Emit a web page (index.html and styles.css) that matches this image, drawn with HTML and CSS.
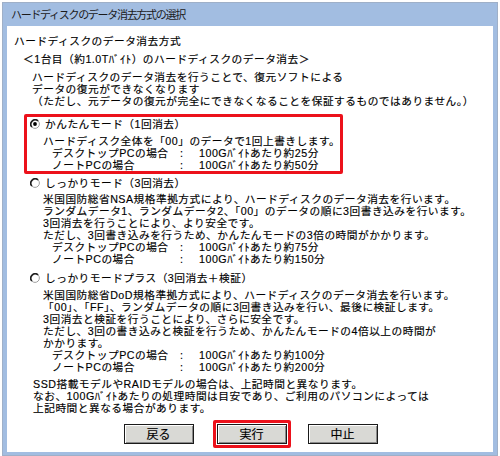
FILE: index.html
```html
<!DOCTYPE html>
<html lang="ja">
<head>
<meta charset="utf-8">
<title>ハードディスクのデータ消去方式の選択</title>
<link rel="stylesheet" href="styles.css">
</head>
<body>
<div class="window">
  <div class="titlebar">ハードディスクのデータ消去方式の選択</div>
  <div class="client">
    <div class="line heading">ハードディスクのデータ消去方式</div>
    <div class="line sub">＜1台目（約1.0Tﾊﾞｲﾄ）のハードディスクのデータ消去＞</div>
    <div class="intro">
      <div class="line">ハードディスクのデータ消去を行うことで、復元ソフトによる</div>
      <div class="line">データの復元ができなくなります</div>
      <div class="line">（ただし、元データの復元が完全にできなくなることを保証するものではありません。）</div>
    </div>

    <div class="option opt1 selected">
      <div class="opt-label">
        <svg class="radio" width="10" height="10" viewBox="0 0 10 10"><circle cx="5" cy="5" r="4.4" fill="#fff" stroke="#a0a0a0" stroke-width="1"/><path d="M1.9 8.1 A4.4 4.4 0 0 1 8.1 1.9" fill="none" stroke="#1e1e1e" stroke-width="1.6"/><circle cx="5" cy="5" r="1.9" fill="#000"/></svg>
        <span class="line">かんたんモード（1回消去）</span>
      </div>
      <div class="desc d1">
        <div class="line">ハードディスク全体を「00」のデータで1回上書きします。</div>
        <div class="time"><span>デスクトップPCの場合</span><span>:</span><span>100Gﾊﾞｲﾄあたり約25分</span></div>
        <div class="time"><span>ノートPCの場合</span><span>:</span><span>100Gﾊﾞｲﾄあたり約50分</span></div>
      </div>
    </div>

    <div class="option opt2">
      <div class="opt-label">
        <svg class="radio" width="10" height="10" viewBox="0 0 10 10"><circle cx="5" cy="5" r="4.4" fill="#fff" stroke="#a0a0a0" stroke-width="1"/><path d="M1.9 8.1 A4.4 4.4 0 0 1 8.1 1.9" fill="none" stroke="#1e1e1e" stroke-width="1.6"/></svg>
        <span class="line">しっかりモード（3回消去）</span>
      </div>
      <div class="desc d2">
        <div class="line">米国国防総省NSA規格準拠方式により、ハードディスクのデータ消去を行います。</div>
        <div class="line">ランダムデータ1、ランダムデータ2、「00」のデータの順に3回書き込みを行います。</div>
        <div class="line">3回消去を行うことにより、より安全です。</div>
        <div class="line">ただし、3回書き込みを行うため、かんたんモードの3倍の時間がかかります。</div>
        <div class="time"><span>デスクトップPCの場合</span><span>:</span><span>100Gﾊﾞｲﾄあたり約75分</span></div>
        <div class="time"><span>ノートPCの場合</span><span>:</span><span>100Gﾊﾞｲﾄあたり約150分</span></div>
      </div>
    </div>

    <div class="option opt3">
      <div class="opt-label">
        <svg class="radio" width="10" height="10" viewBox="0 0 10 10"><circle cx="5" cy="5" r="4.4" fill="#fff" stroke="#a0a0a0" stroke-width="1"/><path d="M1.9 8.1 A4.4 4.4 0 0 1 8.1 1.9" fill="none" stroke="#1e1e1e" stroke-width="1.6"/></svg>
        <span class="line">しっかりモードプラス（3回消去＋検証）</span>
      </div>
      <div class="desc d3">
        <div class="line">米国国防総省DoD規格準拠方式により、ハードディスクのデータ消去を行います。</div>
        <div class="line">「00」、「FF」、ランダムデータの順に3回書き込みを行い、最後に検証します。</div>
        <div class="line">3回消去と検証を行うことにより、さらに安全です。</div>
        <div class="line">ただし、3回の書き込みと検証を行うため、かんたんモードの4倍以上の時間が</div>
        <div class="line">かかります。</div>
        <div class="time"><span>デスクトップPCの場合</span><span>:</span><span>100Gﾊﾞｲﾄあたり約100分</span></div>
        <div class="time"><span>ノートPCの場合</span><span>:</span><span>100Gﾊﾞｲﾄあたり約200分</span></div>
      </div>
    </div>

    <div class="note">
      <div class="line">SSD搭載モデルやRAIDモデルの場合は、上記時間と異なります。</div>
      <div class="line">なお、100Gﾊﾞｲﾄあたりの処理時間は目安であり、ご利用のパソコンによっては</div>
      <div class="line">上記時間と異なる場合があります。</div>
    </div>

    <div class="buttons">
      <button class="btn">戻る</button>
      <div class="focus"><button class="btn">実行</button></div>
      <button class="btn">中止</button>
    </div>
  </div>
</div>
</body>
</html>
```
FILE: styles.css
```css
html, body {
  margin: 0;
  padding: 0;
  background: #ffffff;
}

body {
  font-family: "Liberation Sans", "Noto Sans CJK JP", sans-serif;
  font-size: 10.7px;
  color: #000;
}

.window {
  margin: 2px 0 0 2px;
  width: 496px;
  height: 454px;
  box-sizing: border-box;
  border: 1px solid #9fb0c8;
  background: #a2bde1;
  padding: 0 4px 3px 4px;
  display: flex;
  flex-direction: column;
}

.titlebar {
  height: 23px;
  line-height: 23px;
  padding-left: 4px;
  font-family: "Noto Sans CJK JP", sans-serif;
  font-size: 11px;
  letter-spacing: -1.3px;
  color: #1b1b1b;
  white-space: nowrap;
}

.client {
  flex: 1;
  background: #ffffff;
  padding-top: 9px;
  display: flex;
  flex-direction: column;
  align-items: flex-start;
  -webkit-text-stroke: 0.15px #000;
}

.line,
.time {
  height: 12px;
  line-height: 12px;
  letter-spacing: 0.5px;
  white-space: nowrap;
}

.heading {
  margin-left: 7px;
}

.sub {
  margin-left: 16px;
  margin-top: 6px;
}

.intro {
  margin-left: 25px;
  margin-top: 6px;
}

.option {
  margin-left: 17px;
  border: 3px solid transparent;
  padding: 0 0 0 3px;
  box-sizing: border-box;
}

.option.selected {
  border-color: #ec111b;
  border-radius: 2px;
  width: 319px;
  padding-top: 1px;
}

.opt1 { margin-top: 7px; }
.opt2 { margin-top: 0; }
.opt3 { margin-top: 1px; }

.opt-label {
  display: flex;
  align-items: center;
  height: 12px;
}

.radio {
  display: block;
  flex: none;
  margin-right: 5px;
}

.desc {
  margin-left: 13px;
}

.d1 { margin-top: 5px; }
.d2 { margin-top: 4px; }
.d3 { margin-top: 5px; }

.time {
  display: grid;
  grid-template-columns: 128px 19px auto;
  margin-left: 9px;
}

.note {
  margin-left: 26px;
  margin-top: 2px;
}

.buttons {
  align-self: stretch;
  display: flex;
  justify-content: center;
  align-items: center;
  margin-top: 6px;
  padding-left: 1px;
}

.btn {
  width: 70px;
  height: 20px;
  margin: 0;
  padding: 0;
  font-family: "Noto Sans CJK JP", sans-serif;
  font-size: 12px;
  line-height: 18px;
  color: #000;
  background: #d9d9d5;
  border: 1px solid #1a1a1a;
  box-shadow: inset 1px 1px #ffffff, inset -1px -1px #8a8a8a;
  border-radius: 0;
}

.buttons > .btn:first-child {
  margin-right: 19px;
}

.buttons > .btn:last-child {
  margin-left: 17px;
}

.focus {
  border: 3px solid #ec111b;
  border-radius: 2px;
  padding: 1px;
  display: flex;
}
```
